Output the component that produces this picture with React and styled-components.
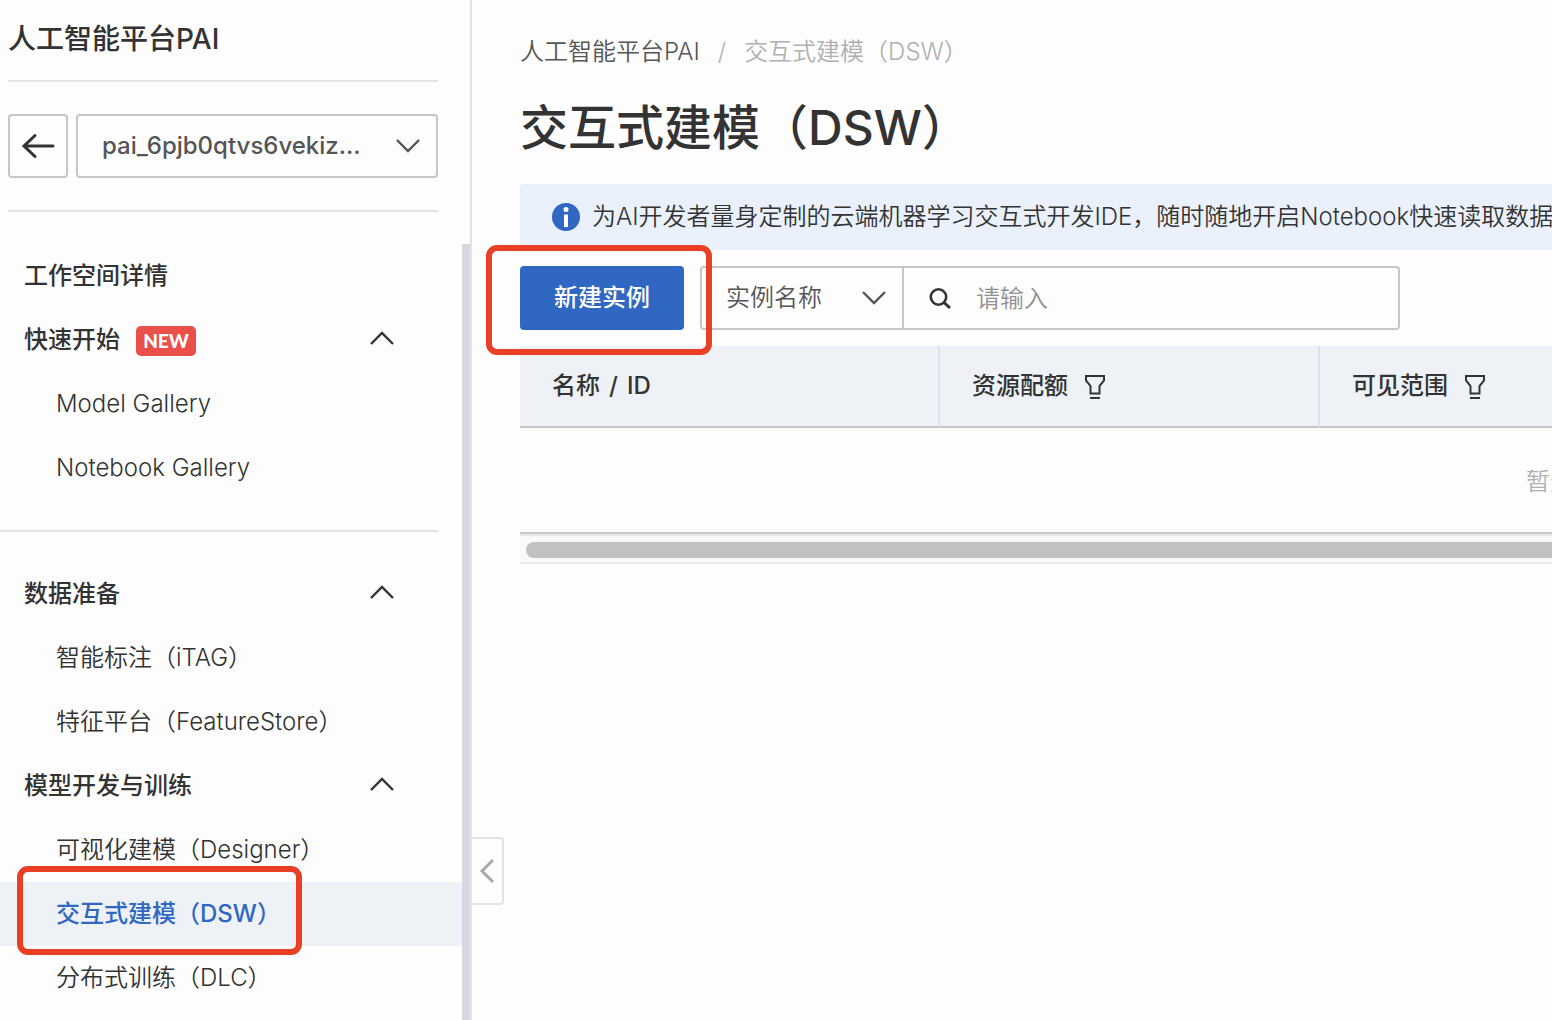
import styled, { createGlobalStyle } from 'styled-components';

const GlobalStyle = createGlobalStyle`
  * {
    box-sizing: border-box;
  }

  body {
    margin: 0;
    background: #fdfdfd;
    color: #333;
    font-family: Inter, "Noto Sans CJK SC", sans-serif;
    font-size: 24px;
    font-weight: 350;
    line-height: 36px;
    overflow-x: hidden;
  }

  button,
  input,
  select {
    font: inherit;
    color: inherit;
  }
`;

const Page = styled.div`
  display: flex;
  min-height: 100vh;
`;

const Sidebar = styled.aside`
  position: relative;
  display: flex;
  flex-direction: column;
  flex: 0 0 472px;
  border-right: 2px solid #e3e3e5;
`;

const SidebarTop = styled.div`
  padding: 0 32px 0 8px;
  margin-bottom: 32px;
`;

const ProductName = styled.div`
  padding: 18px 0 20px;
  font-size: 28px;
  line-height: 42px;
  font-weight: 500;
`;

const Divider = styled.hr`
  width: ${(props) => props.$width || 'auto'};
  height: 2px;
  margin: ${(props) => props.$margin || '0'};
  border: 0;
  background: #e3e3e3;
`;

const WorkspaceRow = styled.div`
  display: flex;
  gap: 8px;
  padding: 32px 0;
`;

const BackButton = styled.button`
  display: flex;
  align-items: center;
  justify-content: center;
  width: 60px;
  height: 64px;
  padding: 0;
  border: 2px solid #c6c6c6;
  border-radius: 4px;
  background: transparent;
`;

const SelectBox = styled.div`
  display: grid;
  flex: ${(props) => props.$flex || '1'};
  align-items: center;
  height: ${(props) => (props.$plain ? '60px' : '64px')};
  border: ${(props) => (props.$plain ? '0' : '2px solid #c6c6c6')};
  border-right: 2px solid #c6c6c6;
  border-radius: ${(props) => (props.$plain ? '0' : '4px')};
  color: #555;

  select,
  svg {
    grid-area: 1 / 1;
  }

  select {
    width: 100%;
    height: 100%;
    padding: 0 24px;
    border: 0;
    outline: 0;
    appearance: none;
    background: transparent;
    font-weight: ${(props) => (props.$plain ? 350 : 500)};
  }

  svg {
    justify-self: end;
    margin-right: 16px;
    pointer-events: none;
  }
`;

const NavScroll = styled.nav`
  flex: 1;
  border-right: 8px solid #d4d8e3;
`;

const GroupButton = styled.button`
  display: flex;
  align-items: center;
  width: 100%;
  height: 64px;
  padding: 0 68px 0 24px;
  border: 0;
  background: transparent;
  font-weight: 500;
  text-align: left;

  svg {
    margin: 0 0 4px auto;
  }
`;

const GroupLink = styled.a`
  display: flex;
  align-items: center;
  height: 64px;
  padding: 0 24px;
  color: #333;
  font-weight: 500;
  text-decoration: none;
`;

const NavItem = styled.a`
  position: relative;
  display: flex;
  align-items: center;
  height: 64px;
  padding: 0 24px 0 56px;
  background: ${(props) => (props.$active ? '#eef1f6' : 'transparent')};
  color: ${(props) => (props.$active ? '#3067c3' : '#333')};
  font-weight: ${(props) => (props.$active ? 500 : 350)};
  text-decoration: none;
`;

const NewBadge = styled.span`
  display: flex;
  align-items: center;
  justify-content: center;
  width: 60px;
  height: 30px;
  margin: 2px 0 0 16px;
  border-radius: 5px;
  background: #ea4f49;
  color: #fff;
  font-family: Lato, sans-serif;
  font-size: 19px;
  font-weight: 900;
`;

const CollapseHandle = styled.button`
  position: absolute;
  top: 837px;
  left: 100%;
  display: flex;
  align-items: center;
  justify-content: center;
  width: 34px;
  height: 68px;
  padding: 0;
  border: 2px solid #e3e3e5;
  border-radius: 0 4px 4px 0;
  background: #fdfdfd;
`;

const Highlight = styled.span`
  position: absolute;
  z-index: 2;
  inset: ${(props) => props.$inset};
  border: 6px solid #e83f25;
  border-radius: 11px;
  pointer-events: none;
`;

const Main = styled.main`
  flex: 1;
  min-width: 0;
  padding: 34px 0 0 48px;
`;

const Breadcrumb = styled.nav`
  display: flex;
  gap: 18px;
  color: #b0b0b0;

  a {
    color: #555;
    text-decoration: none;
  }
`;

const PageTitle = styled.h1`
  margin: 22px 0 20px;
  font-size: 48px;
  line-height: 72px;
  font-weight: 500;
`;

const Notice = styled.div`
  display: flex;
  align-items: center;
  gap: 12px;
  height: 66px;
  padding-left: 32px;
  border-radius: 4px 0 0 0;
  background: #eaf1fd;
  white-space: nowrap;
  overflow: hidden;

  svg {
    flex: none;
  }
`;

const Toolbar = styled.div`
  display: flex;
  gap: 16px;
  padding: 16px 0;
`;

const CreateButton = styled.button`
  position: relative;
  width: 164px;
  height: 64px;
  padding: 0;
  border: 0;
  border-radius: 4px;
  background: #3067c3;
  color: #fff;
  font-weight: 500;
`;

const SearchGroup = styled.div`
  display: flex;
  flex: 0 1 700px;
  height: 64px;
  border: 2px solid #c6c6c6;
  border-radius: 4px;
`;

const SearchField = styled.label`
  display: flex;
  align-items: center;
  flex: 1;
  gap: 24px;
  padding-left: 24px;

  input {
    flex: 1;
    min-width: 0;
    height: 100%;
    padding: 0;
    border: 0;
    outline: 0;
    background: transparent;
  }

  input::placeholder {
    color: #909090;
    opacity: 1;
  }
`;

const TableViewport = styled.div`
  overflow: hidden;
`;

const Table = styled.table`
  width: 2108px;
  border-collapse: separate;
  border-spacing: 0;
  table-layout: fixed;
`;

const HeadCell = styled.th`
  width: ${(props) => props.$width || 'auto'};
  height: 82px;
  padding: 0 0 0 32px;
  border-right: 2px solid #d9e3f0;
  border-bottom: 2px solid #c6c6c6;
  background: #eef1f6;
  font-weight: 500;
  text-align: left;
`;

const HeadContent = styled.div`
  display: flex;
  align-items: center;
  gap: ${(props) => props.$gap || '16px'};
`;

const FilterButton = styled.button`
  display: flex;
  padding: 0;
  border: 0;
  background: transparent;
`;

const EmptyCell = styled.td`
  height: 106px;
  padding: 4px 0 0;
  border-bottom: 2px solid #c6c6c6;
  color: #b0b0b0;
  text-align: center;
`;

const ScrollTrack = styled.div`
  height: 30px;
  padding: 6px 0 0 6px;
  border-top: 2px solid #e8e8e8;
  border-bottom: 2px solid #ececec;
  background: #f9f9f9;
`;

const ScrollThumb = styled.div`
  height: 16px;
  border-radius: 8px 0 0 8px;
  background: #c1c1c1;
`;

const Chevron = ({ up }) => (
  <svg width="24" height="16" viewBox="1 0 24 16" fill="none" stroke={up ? '#333' : '#555'} strokeWidth="2.4">
    <path d={up ? 'M2 14 13 3l11 11' : 'M2 2l11 11L24 2'} />
  </svg>
);

const BackIcon = () => (
  <svg width="34" height="26" viewBox="0 0 34 26" fill="none" stroke="#333" strokeWidth="3" strokeLinecap="round">
    <path d="M14 2.500 3 13l11 10.500M3 13h29" />
    <path d="M1 13l5-3v6z" fill="#333" stroke="none" />
  </svg>
);

const InfoIcon = () => (
  <svg width="28" height="28" viewBox="0 0 28 28">
    <circle cx="14" cy="14" r="14" fill="#3067c3" />
    <circle cx="14" cy="6.5" r="2.5" fill="#fff" />
    <path d="M12 11.500h4V24h-4z" fill="#fff" />
  </svg>
);

const SearchIcon = () => (
  <svg width="24" height="24" viewBox="0 0 24 24" fill="none" stroke="#333" strokeWidth="2.600">
    <circle cx="10.500" cy="11" r="7.700" />
    <path d="M16 16.500 22 22" strokeWidth="3" />
  </svg>
);

const FilterIcon = () => (
  <svg width="22" height="26" viewBox="0 0 22 26" fill="none" stroke="#333" strokeWidth="2">
    <path d="M2 3h18v4.500L15.500 13v7.500h-9V13L2 7.500z" />
    <path d="M6 25h10" />
  </svg>
);

const navSections = [
  {
    title: '快速开始',
    isNew: true,
    items: ['Model Gallery', 'Notebook Gallery'],
    divided: true,
  },
  {
    title: '数据准备',
    items: ['智能标注（iTAG）', '特征平台（FeatureStore）'],
  },
  {
    title: '模型开发与训练',
    items: ['可视化建模（Designer）', '交互式建模（DSW）', '分布式训练（DLC）'],
  },
];

const activeItem = '交互式建模（DSW）';

const NavSection = ({ title, isNew, items, divided }) => (
  <>
    <GroupButton type="button" aria-expanded="true">
      {title}
      {isNew && <NewBadge>NEW</NewBadge>}
      <Chevron up />
    </GroupButton>
    {items.map((item) => (
      <NavItem key={item} href="#" $active={item === activeItem}>
        {item}
        {item === activeItem && <Highlight $inset="-16px 160px -9px 17px" />}
      </NavItem>
    ))}
    {divided && <Divider $width="438px" $margin="30px 0" />}
  </>
);

export default function App() {
  return (
    <>
      <GlobalStyle />
      <Page>
        <Sidebar>
          <SidebarTop>
            <ProductName>人工智能平台PAI</ProductName>
            <Divider />
            <WorkspaceRow>
              <BackButton type="button" aria-label="返回">
                <BackIcon />
              </BackButton>
              <SelectBox>
                <select aria-label="工作空间">
                  <option>pai_6pjb0qtvs6vekiz...</option>
                </select>
                <Chevron />
              </SelectBox>
            </WorkspaceRow>
            <Divider />
          </SidebarTop>
          <NavScroll>
            <GroupLink href="#">工作空间详情</GroupLink>
            {navSections.map((section) => (
              <NavSection key={section.title} {...section} />
            ))}
          </NavScroll>
          <CollapseHandle type="button" aria-label="收起">
            <svg width="16" height="26" viewBox="0 0 16 26" fill="none" stroke="#aaa" strokeWidth="3">
              <path d="M14 2 3 13l11 11" />
            </svg>
          </CollapseHandle>
        </Sidebar>
        <Main>
          <Breadcrumb>
            <a href="#">人工智能平台PAI</a>
            <span>/</span>
            <span>交互式建模（DSW）</span>
          </Breadcrumb>
          <PageTitle>交互式建模（DSW）</PageTitle>
          <Notice>
            <InfoIcon />
            <span>为AI开发者量身定制的云端机器学习交互式开发IDE，随时随地开启Notebook快速读取数据</span>
          </Notice>
          <Toolbar>
            <CreateButton type="button">
              新建实例
              <Highlight $inset="-21px -28px -25px -34px" />
            </CreateButton>
            <SearchGroup>
              <SelectBox $plain $flex="0 0 202px">
                <select aria-label="搜索字段">
                  <option>实例名称</option>
                </select>
                <Chevron />
              </SelectBox>
              <SearchField>
                <SearchIcon />
                <input type="text" placeholder="请输入" aria-label="实例名称" />
              </SearchField>
            </SearchGroup>
          </Toolbar>
          <TableViewport>
            <Table>
              <thead>
                <tr>
                  <HeadCell $width="420px">
                    <HeadContent $gap="9px">
                      <span>名称</span>
                      <span>/</span>
                      <span>ID</span>
                    </HeadContent>
                  </HeadCell>
                  <HeadCell $width="380px">
                    <HeadContent>
                      资源配额
                      <FilterButton type="button" aria-label="筛选资源配额">
                        <FilterIcon />
                      </FilterButton>
                    </HeadContent>
                  </HeadCell>
                  <HeadCell>
                    <HeadContent>
                      可见范围
                      <FilterButton type="button" aria-label="筛选可见范围">
                        <FilterIcon />
                      </FilterButton>
                    </HeadContent>
                  </HeadCell>
                </tr>
              </thead>
              <tbody>
                <tr>
                  <EmptyCell colSpan={3}>暂无数据</EmptyCell>
                </tr>
              </tbody>
            </Table>
          </TableViewport>
          <ScrollTrack>
            <ScrollThumb />
          </ScrollTrack>
        </Main>
      </Page>
    </>
  );
}
